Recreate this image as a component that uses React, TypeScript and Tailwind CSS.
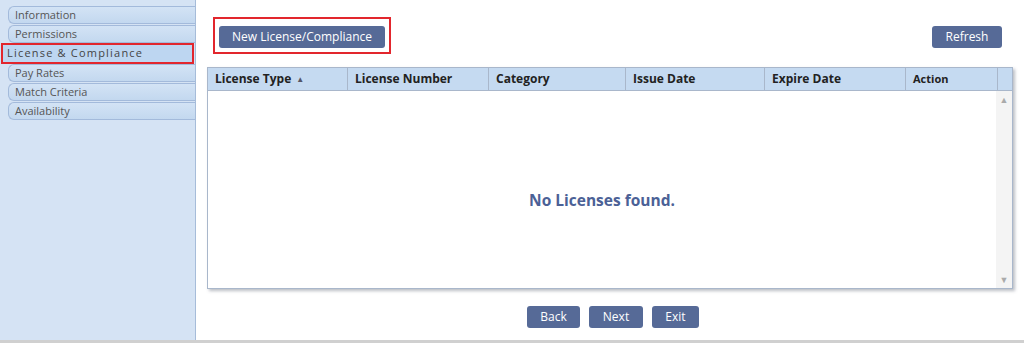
import React from "react";

const tabs = ["Information", "Permissions", "License & Compliance", "Pay Rates", "Match Criteria", "Availability"];
const cols = ["License Type", "License Number", "Category", "Issue Date", "Expire Date", "Action"];

function Btn({ label, w }: { label: string; w: string }) {
  return (
    <button
      className={`${w} h-[22px] rounded-[3px] bg-[#566a97] text-[12px] leading-[22px] text-white text-center`}
    >
      {label}
    </button>
  );
}

export default function App() {
  return (
    <div className="flex h-[343px] w-[1024px] flex-col bg-white font-['Open_Sans',sans-serif]">
      <div className="flex flex-1">
        {/* Sidebar */}
        <div className="flex w-[196px] flex-col gap-[1px] border-r border-[#a6bcd9] bg-[#d5e3f4] pt-[6px]">
          {tabs.map((t) =>
            t === "License & Compliance" ? (
              <div
                key={t}
                className="-my-px ml-[1px] mr-[1px] h-[21px] border-2 border-[#e2262d] bg-[#bdd6f1] pl-[4px] text-[11px] leading-[16px] tracking-[1.2px] text-[#444]"
              >
                {t}
              </div>
            ) : (
              <div
                key={t}
                className="ml-[8px] h-[18px] rounded-l-[6px] border border-r-0 border-[#a3badb] bg-gradient-to-b from-[#d3e3f5] to-[#c3d8ef] pl-[6px] text-[11px] leading-[15px] text-[#555]"
              >
                {t}
              </div>
            )
          )}
        </div>

        {/* Main */}
        <div className="flex flex-1 flex-col px-[11px] pt-[17px]">
          <div className="flex items-start justify-between">
            <div className="ml-[6px] border-2 border-[#e2262d] p-[4px]">
              <Btn label="New License/Compliance" w="w-[166px]" />
            </div>
            <div className="mr-[11px] mt-[6px]">
              <Btn label="Refresh" w="w-[70px]" />
            </div>
          </div>

          <div className="mt-[13px] flex h-[222px] flex-col border border-[#a9b7cb] shadow-[2px_2px_3px_rgba(60,70,90,0.35)]">
            <div className="grid h-[23px] grid-cols-[140px_141px_137px_139px_141px_92px_1fr] border-b border-[#a9b7cb] bg-[#c5daf1]">
              {cols.map((c, i) => (
                <div
                  key={c}
                  className={`flex items-center border-r border-[#a9b7cb] pl-[7px] font-bold text-[#222] ${
                    i === 5 ? "text-[11px]" : "text-[12px]"
                  }`}
                >
                  {c}
                  {i === 0 && <span className="ml-[5px] text-[8px] text-[#556]">▲</span>}
                </div>
              ))}
              <div />
            </div>
            <div className="flex flex-1">
              <div className="flex flex-1 items-center justify-center pt-[22px] text-[15.5px] font-bold text-[#4b6196]">
                No Licenses found.
              </div>
              <div className="flex w-[16px] flex-col items-center justify-between bg-[#f4f4f4] py-[2px] text-[9px] text-[#aaa]">
                <span>▲</span>
                <span>▼</span>
              </div>
            </div>
          </div>

          <div className="mt-[17px] flex justify-center gap-[9px] pl-[6px]">
            <Btn label="Back" w="w-[53px]" />
            <Btn label="Next" w="w-[54px]" />
            <Btn label="Exit" w="w-[47px]" />
          </div>
        </div>
      </div>
      <div className="h-[3px] bg-[#d0d0d0]" />
    </div>
  );
}
